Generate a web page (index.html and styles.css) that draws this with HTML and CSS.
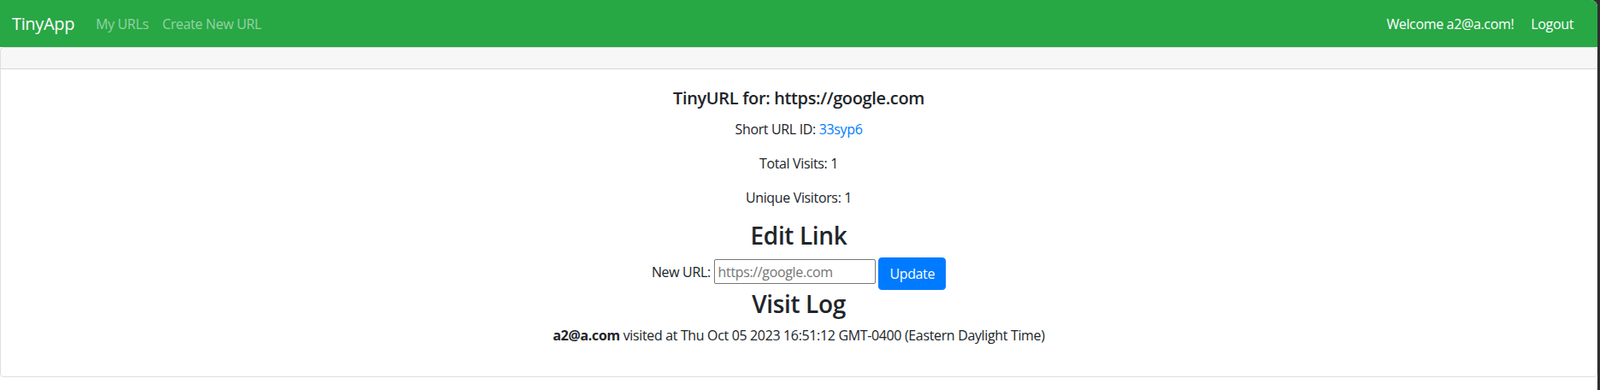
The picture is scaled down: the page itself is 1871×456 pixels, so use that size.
FILE: index.html
```html
<!DOCTYPE html>
<html lang="en">
<head>
<meta charset="utf-8">
<title>TinyApp</title>
<link rel="stylesheet" href="styles.css">
</head>
<body>
<div class="page">
  <nav class="navbar">
    <a class="brand" href="#">TinyApp</a>
    <div class="nav-left">
      <a class="nav-link" href="#">My URLs</a>
      <a class="nav-link" href="#">Create New URL</a>
    </div>
    <div class="nav-right">
      <span class="nav-text">Welcome a2@a.com!</span>
      <a class="nav-link light" href="#">Logout</a>
    </div>
  </nav>
  <div class="card">
    <div class="card-header"></div>
    <div class="card-body">
      <h5 class="card-title">TinyURL for: https://google.com</h5>
      <p class="card-text">Short URL ID: <a class="link" href="#">33syp6</a></p>
      <p class="card-text">Total Visits: 1</p>
      <p class="card-text">Unique Visitors: 1</p>
      <h3 class="section-title">Edit Link</h3>
      <form class="edit-form">
        <label class="form-label" for="newurl">New URL:</label>
        <input class="url-input" id="newurl" type="text" placeholder="https://google.com">
        <button class="btn" type="button">Update</button>
      </form>
      <h3 class="section-title">Visit Log</h3>
      <p class="card-text"><b>a2@a.com</b> visited at Thu Oct 05 2023 16:51:12 GMT-0400 (Eastern Daylight Time)</p>
    </div>
  </div>
</div>
</body>
</html>
```

FILE: styles.css
```css
html, body {
  margin: 0;
  padding: 0;
}
body {
  background: #2e2e2e;
  font-family: "Open Sans", "Noto Sans", "Liberation Sans", sans-serif;
  font-size: 16px;
  line-height: 1.5;
  letter-spacing: -0.35px;
  color: #212529;
}
.page {
  background: #ffffff;
  margin-right: 3px;
  min-height: 456px;
  border-top-right-radius: 8px;
  overflow: hidden;
}
.navbar {
  display: flex;
  align-items: center;
  height: 55px;
  padding: 0 20px 0 14px;
  background: #28a745;
  box-sizing: border-box;
}
.brand {
  color: #ffffff;
  font-size: 20px;
  text-decoration: none;
  margin-right: 17px;
}
.nav-left {
  display: flex;
  flex: 1;
}
.nav-right {
  display: flex;
  align-items: center;
}
.nav-link {
  color: rgba(255, 255, 255, 0.5);
  text-decoration: none;
  padding: 0 8px;
}
.nav-link.light {
  color: #ffffff;
  padding-right: 8px;
  padding-left: 12px;
}
.nav-text {
  color: #ffffff;
  padding: 0 8px;
}
.card {
  border: 1px solid rgba(0, 0, 0, 0.125);
  border-radius: 4px;
}
.card-header {
  height: 24px;
  background: rgba(0, 0, 0, 0.03);
  border-bottom: 1px solid rgba(0, 0, 0, 0.125);
}
.card-body {
  padding: 20px 20px 20px;
  text-align: center;
}
.card-title {
  font-size: 20px;
  font-weight: 600;
  line-height: 1.2;
  margin: 2px 0 12px;
}
.card-text {
  margin: 0 0 16px;
}
.link {
  color: #007bff;
  text-decoration: none;
}
.section-title {
  font-size: 28px;
  font-weight: 600;
  line-height: 1.2;
  margin: 0 0 8px;
}
.edit-form {
  margin: 0;
}
.url-input {
  width: 189px;
  height: 29px;
  box-sizing: border-box;
  border: 1px solid #767676;
  border-radius: 2px;
  padding: 1px 4px;
  font-family: inherit;
  font-size: 16px;
  letter-spacing: -0.35px;
  color: #212529;
}
.url-input::placeholder {
  color: #757575;
}
.btn {
  display: inline-block;
  font-family: inherit;
  font-size: 16px;
  line-height: 1.5;
  letter-spacing: -0.35px;
  padding: 6px 12px;
  border: 1px solid #007bff;
  border-radius: 4px;
  background: #007bff;
  color: #ffffff;
  vertical-align: middle;
}
```
